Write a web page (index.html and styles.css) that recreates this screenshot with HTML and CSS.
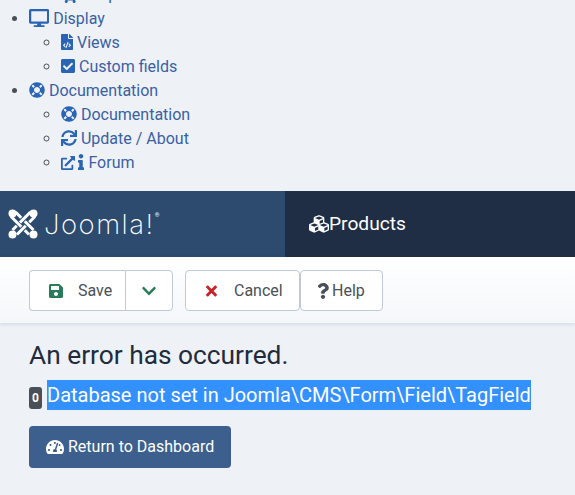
FILE: index.html
```html
<html>
    <head>
        <meta charset="utf-8">
        <title>Products</title>
        <link rel="stylesheet" href="styles.css">
    </head>
    <body>
        <ul class="menu">
            <li>
                <ul>
                    <li><svg class="icon icon-cart" viewBox="0 0 576 512"><path d="M528.12 301.319l47.273-208C578.806 78.301 567.391 64 551.99 64H159.208l-9.166-44.81C147.758 8.021 137.93 0 126.529 0H24C10.745 0 0 10.745 0 24v16c0 13.255 10.745 24 24 24h69.883l70.248 343.435C147.325 417.1 136 435.222 136 456c0 30.928 25.072 56 56 56s56-25.072 56-56c0-15.674-6.447-29.835-16.824-40h209.647C430.447 426.165 424 440.326 424 456c0 30.928 25.072 56 56 56s56-25.072 56-56c0-22.172-12.888-41.332-31.579-50.405l5.517-24.276c3.413-15.018-8.002-29.319-23.403-29.319H218.117l-6.545-32h293.145c11.206 0 20.92-7.754 23.403-18.681z"/></svg> Shop</li>
                </ul>
            </li>
            <li><svg class="icon icon-wide" viewBox="0 0 576 512"><path d="M528 0H48C21.5 0 0 21.5 0 48v320c0 26.5 21.5 48 48 48h192l-16 48h-72c-13.3 0-24 10.7-24 24s10.7 24 24 24h272c13.3 0 24-10.7 24-24s-10.7-24-24-24h-72l-16-48h192c26.5 0 48-21.5 48-48V48c0-26.5-21.5-48-48-48zm-16 352H64V64h448v288z"/></svg> Display
                <ul>
                    <li><svg class="icon" viewBox="0 0 384 512"><path d="M384 121.941V128H256V0h6.059c6.365 0 12.47 2.529 16.971 7.029l97.941 97.941A24.005 24.005 0 0 1 384 121.941zM248 160c-13.2 0-24-10.8-24-24V0H24C10.745 0 0 10.745 0 24v464c0 13.255 10.745 24 24 24h336c13.255 0 24-10.745 24-24V160H248zM123 422l-62-62 62-62 24 24-38 38 38 38zm50 34l-32-10 70-196 32 10zm88-34l-24-24 38-38-38-38 24-24 62 62z"/></svg> Views</li>
                    <li><svg class="icon" viewBox="0 0 448 512"><path d="M400 480H48c-26.51 0-48-21.49-48-48V80c0-26.51 21.49-48 48-48h352c26.51 0 48 21.49 48 48v352c0 26.51-21.49 48-48 48zm-204.686-98.059l184-184c6.248-6.248 6.248-16.379 0-22.627l-22.627-22.627c-6.248-6.248-16.379-6.249-22.628 0L184 302.745l-70.059-70.059c-6.248-6.248-16.379-6.248-22.628 0L68.686 255.313c-6.248 6.248-6.248 16.379 0 22.627l104 104c6.249 6.25 16.379 6.25 22.628.001z"/></svg> Custom fields</li>
                </ul>
            </li>
            <li><svg class="icon" viewBox="0 0 512 512"><path d="M256 8C119.033 8 8 119.033 8 256s111.033 248 248 248 248-111.033 248-248S392.967 8 256 8zm173.696 119.559l-63.399 63.399c-10.987-18.559-26.67-34.252-45.255-45.255l63.399-63.399a218.396 218.396 0 0 1 45.255 45.255zM256 352c-53.019 0-96-42.981-96-96s42.981-96 96-96 96 42.981 96 96-42.981 96-96 96zM127.559 82.304l63.399 63.399c-18.559 10.987-34.252 26.67-45.255 45.255l-63.399-63.399a218.372 218.372 0 0 1 45.255-45.255zM82.304 384.441l63.399-63.399c10.987 18.559 26.67 34.252 45.255 45.255l-63.399 63.399a218.396 218.396 0 0 1-45.255-45.255zm302.137 45.255l-63.399-63.399c18.559-10.987 34.252-26.67 45.255-45.255l63.399 63.399a218.403 218.403 0 0 1-45.255 45.255z"/></svg> Documentation
                <ul>
                    <li><svg class="icon" viewBox="0 0 512 512"><path d="M256 8C119.033 8 8 119.033 8 256s111.033 248 248 248 248-111.033 248-248S392.967 8 256 8zm173.696 119.559l-63.399 63.399c-10.987-18.559-26.67-34.252-45.255-45.255l63.399-63.399a218.396 218.396 0 0 1 45.255 45.255zM256 352c-53.019 0-96-42.981-96-96s42.981-96 96-96 96 42.981 96 96-42.981 96-96 96zM127.559 82.304l63.399 63.399c-18.559 10.987-34.252 26.67-45.255 45.255l-63.399-63.399a218.372 218.372 0 0 1 45.255-45.255zM82.304 384.441l63.399-63.399c10.987 18.559 26.67 34.252 45.255 45.255l-63.399 63.399a218.396 218.396 0 0 1-45.255-45.255zm302.137 45.255l-63.399-63.399c18.559-10.987 34.252-26.67 45.255-45.255l63.399 63.399a218.403 218.403 0 0 1-45.255 45.255z"/></svg> Documentation</li>
                    <li><svg class="icon" viewBox="0 0 512 512"><path d="M440.65 12.57l4 82.77A247.16 247.16 0 0 0 255.83 8C134.73 8 33.91 94.92 12.29 209.82A12 12 0 0 0 24.09 224h49.05a12 12 0 0 0 11.67-9.26 175.91 175.91 0 0 1 317-56.94l-101.46-4.86a12 12 0 0 0-12.57 12v47.41a12 12 0 0 0 12 12H500a12 12 0 0 0 12-12V12a12 12 0 0 0-12-12h-47.37a12 12 0 0 0-11.98 12.57zM255.83 432a175.61 175.61 0 0 1-146-77.8l101.8 4.87a12 12 0 0 0 12.57-12v-47.4a12 12 0 0 0-12-12H12a12 12 0 0 0-12 12V500a12 12 0 0 0 12 12h47.35a12 12 0 0 0 12-12.6l-4.15-82.57A247.17 247.17 0 0 0 255.83 504c121.11 0 221.93-86.92 243.55-201.82a12 12 0 0 0-11.8-14.18h-49.05a12 12 0 0 0-11.67 9.26A175.86 175.86 0 0 1 255.83 432z"/></svg> Update / About</li>
                    <li><svg class="icon icon-link" viewBox="0 0 512 512"><path d="M432,320H400a16,16,0,0,0-16,16V448H64V128H208a16,16,0,0,0,16-16V80a16,16,0,0,0-16-16H48A48,48,0,0,0,0,112V464a48,48,0,0,0,48,48H400a48,48,0,0,0,48-48V336A16,16,0,0,0,432,320ZM488,0h-128c-21.37,0-32.05,25.91-17,41l35.73,35.73L135,320.37a24,24,0,0,0,0,34L157.67,377a24,24,0,0,0,34,0L435.28,133.32,471,169c15,15,41,4.5,41-17V24A24,24,0,0,0,488,0Z"/></svg> <svg class="icon" viewBox="0 0 192 512"><path d="M20 424.229h20V279.771H20c-11.046 0-20-8.954-20-20V212c0-11.046 8.954-20 20-20h112c11.046 0 20 8.954 20 20v212.229h20c11.046 0 20 8.954 20 20V492c0 11.046-8.954 20-20 20H20c-11.046 0-20-8.954-20-20v-47.771c0-11.046 8.954-20 20-20zM96 0C56.235 0 24 32.235 24 72s32.235 72 72 72 72-32.235 72-72S135.764 0 96 0z"/></svg> Forum</li>
                </ul>
            </li>
        </ul>

        <header class="header">
            <div class="brand">
                <svg class="brand-mark" viewBox="0 0 30 30">
                    <g class="band">
                        <path class="band-gap" d="M22.5 3 L4.5 21"/>
                        <path class="band-fill" d="M22.5 3 L4.5 21"/>
                        <path class="band-gap" d="M3 7.5 L21 25.5"/>
                        <path class="band-fill" d="M3 7.5 L21 25.5"/>
                        <path class="band-gap" d="M27 7.5 L9 25.5"/>
                        <path class="band-fill" d="M27 7.5 L9 25.5"/>
                        <path class="band-gap" d="M7.5 3 L25.5 21"/>
                        <path class="band-fill" d="M7.5 3 L25.5 21"/>
                        <path class="band-gap" d="M17.5 8 L12.5 13"/>
                        <path class="band-fill" d="M18 7.5 L12 13.5"/>
                    </g>
                    <g fill="#fff">
                        <circle cx="4.5" cy="4.5" r="4"/>
                        <circle cx="25.5" cy="4.5" r="4"/>
                        <circle cx="4.5" cy="25.5" r="4"/>
                        <circle cx="25.5" cy="25.5" r="4"/>
                    </g>
                </svg>
                <span class="brand-name">Joomla!</span><span class="brand-reg">®</span>
            </div>
            <div class="page-title">
                <svg class="title-icon" viewBox="0 0 512 512"><path d="M488.6 250.2L392 214V105.5c0-15-9.3-28.4-23.4-33.7l-100-37.5c-8.1-3.1-17.1-3.1-25.3 0l-100 37.5c-14.1 5.3-23.4 18.7-23.4 33.7V214l-96.6 36.2C9.3 255.5 0 268.9 0 283.9V394c0 13.6 7.7 26.1 19.9 32.2l100 50c10.1 5.1 22.1 5.1 32.2 0l103.9-52 103.9 52c10.1 5.1 22.1 5.1 32.2 0l100-50c12.2-6.1 19.9-18.6 19.9-32.2V283.9c0-15-9.3-28.4-23.4-33.7zM358 214.8l-85 31.9v-68.2l85-37v73.3zM154 104.1l102-38.2 102 38.2v.6l-102 41.4-102-41.4v-.6zm84 291.1l-85 42.5v-79.1l85-38.8v75.4zm0-112l-102 41.4-102-41.4v-.6l102-38.2 102 38.2v.6zm240 112l-85 42.5v-79.1l85-38.8v75.4zm0-112l-102 41.4-102-41.4v-.6l102-38.2 102 38.2v.6z"/></svg>
                <span>Products</span>
            </div>
        </header>

        <div class="toolbar">
            <div class="btn-group">
                <div class="btn btn-save">
                    <svg class="btn-icon save" viewBox="0 0 448 512"><path d="M433.941 129.941l-83.882-83.882A48 48 0 0 0 316.118 32H48C21.49 32 0 53.49 0 80v352c0 26.51 21.49 48 48 48h352c26.51 0 48-21.49 48-48V163.882a48 48 0 0 0-14.059-33.941zM224 416c-35.346 0-64-28.654-64-64 0-35.346 28.654-64 64-64s64 28.654 64 64c0 35.346-28.654 64-64 64zm96-304.52V212c0 6.627-5.373 12-12 12H76c-6.627 0-12-5.373-12-12V108c0-6.627 5.373-12 12-12h228.52c3.183 0 6.235 1.264 8.485 3.515l3.48 3.48A11.996 11.996 0 0 1 320 111.48z"/></svg>
                    <span>Save</span>
                </div>
                <div class="btn btn-more">
                    <svg class="btn-icon save" viewBox="0 0 448 512"><path d="M207.029 381.476L12.686 187.132c-9.373-9.373-9.373-24.569 0-33.941l22.667-22.667c9.357-9.357 24.522-9.375 33.901-.04L224 284.505l154.745-154.021c9.379-9.335 24.544-9.317 33.901.04l22.667 22.667c9.373 9.373 9.373 24.569 0 33.941L240.971 381.476c-9.373 9.372-24.569 9.372-33.942 0z"/></svg>
                </div>
            </div>
            <div class="btn btn-cancel">
                <svg class="btn-icon cancel" viewBox="0 0 352 512"><path d="M242.72 256l100.07-100.07c12.28-12.28 12.28-32.19 0-44.48l-22.24-22.24c-12.28-12.28-32.19-12.28-44.48 0L176 189.28 75.93 89.21c-12.28-12.28-32.19-12.28-44.48 0L9.21 111.45c-12.28 12.28-12.28 32.19 0 44.48L109.28 256 9.21 356.07c-12.28 12.28-12.28 32.19 0 44.48l22.24 22.24c12.28 12.28 32.2 12.28 44.48 0L176 322.72l100.07 100.07c12.28 12.28 32.2 12.28 44.48 0l22.24-22.24c12.28-12.28 12.28-32.19 0-44.48L242.72 256z"/></svg>
                <span>Cancel</span>
            </div>
            <div class="btn btn-help">
                <svg class="btn-icon help" viewBox="0 0 384 512"><path d="M202.021 0C122.202 0 70.503 32.703 29.914 91.026c-7.363 10.58-5.093 25.086 5.178 32.874l43.138 32.709c10.373 7.865 25.132 6.026 33.253-4.148 25.049-31.381 43.63-49.449 82.757-49.449 30.764 0 68.816 19.799 68.816 49.631 0 22.552-18.617 34.134-48.993 51.164-35.423 19.86-82.299 44.576-82.299 106.405V320c0 13.255 10.745 24 24 24h72.471c13.255 0 24-10.745 24-24v-5.773c0-42.86 125.268-44.645 125.268-160.627C377.504 66.256 286.902 0 202.021 0zM192 373.459c-38.196 0-69.271 31.075-69.271 69.271 0 38.195 31.075 69.27 69.271 69.27s69.271-31.075 69.271-69.271-31.075-69.27-69.271-69.27z"/></svg>
                <span>Help</span>
            </div>
        </div>

        <main class="content">
            <h1>An error has occurred.</h1>
            <p class="message"><span class="badge">0</span><span class="selected">Database not set in Joomla\CMS\Form\Field\TagField</span></p>
            <div class="btn-return">
                <svg class="return-icon" viewBox="0 0 576 512"><path d="M288 32C128.94 32 0 160.94 0 320c0 52.8 14.25 102.26 39.06 144.8 5.61 9.62 16.3 15.2 27.44 15.2h443c11.14 0 21.83-5.58 27.44-15.2C561.75 422.26 576 372.8 576 320c0-159.06-128.94-288-288-288zm0 64c14.71 0 26.58 10.13 30.32 23.65-1.11 2.26-2.64 4.23-3.45 6.67l-9.22 27.67c-5.13 3.49-10.97 6.01-17.64 6.01-17.67 0-32-14.33-32-32S270.33 96 288 96zM96 384c-17.67 0-32-14.33-32-32s14.33-32 32-32 32 14.33 32 32-14.33 32-32 32zm48-160c-17.67 0-32-14.33-32-32s14.33-32 32-32 32 14.33 32 32-14.33 32-32 32zm246.77-72.41l-61.33 184C343.13 347.33 352 364.54 352 384c0 11.72-3.38 22.55-8.88 32H232.88c-5.5-9.45-8.88-20.28-8.88-32 0-33.94 26.5-61.43 59.9-63.59l61.34-184.01c4.17-12.56 17.73-19.45 30.36-15.17 12.57 4.19 19.35 17.79 15.17 30.36zm14.66 57.2l15.52-46.55c3.47-1.29 7.13-2.23 11.05-2.23 17.67 0 32 14.33 32 32s-14.33 32-32 32c-11.38-.01-20.89-6.28-26.57-15.22zM480 384c-17.67 0-32-14.33-32-32s14.33-32 32-32 32 14.33 32 32-14.33 32-32 32z"/></svg>
                <span>Return to Dashboard</span>
            </div>
        </main>
    </body>
</html>
```

FILE: styles.css
```css
html {
    overflow: hidden;
}
body {
    margin: 0;
    height: 495px;
    overflow: hidden;
    font-family: Roboto, sans-serif;
    font-size: 16px;
    line-height: 24px;
    color: #22262a;
    background-color: #eef2f7;
}
.menu {
    margin: -41px 0 16px;
    padding-left: 29px;
    color: #3b5fa5;
}
.menu ul {
    margin: 0;
    padding-left: 32px;
}
.menu li::marker {
    color: #495057;
}
.icon {
    height: 16px;
    width: auto;
    vertical-align: -2px;
    fill: #2a64b4;
}
.icon-wide {
    height: 18px;
    vertical-align: -3px;
}
.icon-cart {
    height: 14px;
    vertical-align: -3px;
}
.icon-link {
    height: 14px;
    margin-right: -.5px;
}
.header {
    display: flex;
    height: 66px;
    background-color: #2d4a6f;
}
.brand {
    width: 285px;
    display: flex;
    align-items: center;
    padding-left: 8px;
    box-sizing: border-box;
    color: #fff;
}
.brand-mark {
    width: 30px;
    height: 30px;
    margin-right: 6px;
}
.band path {
    fill: none;
}
.band-gap {
    stroke: #2d4a6f;
    stroke-width: 5;
}
.band-fill {
    stroke: #fff;
    stroke-width: 3;
}
.brand-name {
    font-family: Inter, sans-serif;
    font-weight: 200;
    font-size: 27.5px;
    letter-spacing: 1.5px;
}
.brand-reg {
    font-size: 6px;
    align-self: flex-start;
    margin-top: 20px;
    line-height: 8px;
}
.page-title {
    flex: 1;
    display: flex;
    align-items: center;
    padding-left: 24px;
    background-color: #1f2e45;
    color: #fff;
    font-size: 19.2px;
    font-weight: 400;
}
.title-icon {
    width: 20px;
    height: 20px;
    fill: #fff;
}
.toolbar {
    display: flex;
    align-items: center;
    height: 66px;
    padding-left: 29px;
    background: linear-gradient(#fff, #f4f7fa);
    box-shadow: 0 1px 4px rgba(30, 50, 80, .15);
}
.btn-group {
    display: flex;
    margin-right: 12px;
}
.btn {
    display: flex;
    align-items: center;
    box-sizing: border-box;
    height: 41px;
    padding-top: 1px;
    background-color: #fff;
    border: 1px solid #c0c9d8;
    border-radius: 4px;
    color: #495057;
}
.btn-save {
    width: 96px;
    padding-left: 19px;
    border-right: 0;
    border-radius: 4px 0 0 4px;
}
.btn-save span {
    margin-left: 15px;
}
.btn-more {
    width: 48px;
    justify-content: center;
    border-radius: 0 4px 4px 0;
}
.btn-cancel {
    width: 115px;
    padding-left: 20px;
}
.btn-cancel span {
    margin-left: 17px;
}
.btn-help {
    width: 83px;
    padding-left: 16px;
}
.btn-help span {
    margin-left: 3px;
}
.btn-icon {
    height: 16px;
    width: auto;
}
.save {
    fill: #2a7a5c;
}
.cancel {
    fill: #c8232b;
}
.help {
    fill: #495057;
}
.content {
    padding: 16px 29px 0;
}
h1 {
    margin: 0;
    font-size: 26.3px;
    font-weight: 400;
    line-height: 32px;
    color: #212b3d;
}
.message {
    display: flex;
    align-items: flex-end;
    margin: 9px 0 16px;
    font-size: 20px;
}
.badge {
    box-sizing: border-box;
    width: 13px;
    height: 22px;
    margin-right: 5px;
    margin-bottom: 1px;
    background-color: #495057;
    border-radius: 3px;
    color: #fff;
    font-size: 12px;
    font-weight: 700;
    line-height: 22px;
    text-align: center;
}
.selected {
    background-color: #3390ff;
    color: #fff;
    line-height: 30px;
}
.btn-return {
    display: inline-flex;
    align-items: center;
    box-sizing: border-box;
    width: 202px;
    height: 42px;
    padding-left: 17px;
    background-color: #3c5f8e;
    border-radius: 4px;
    color: #fff;
}
.btn-return span {
    margin-left: 4px;
}
.return-icon {
    height: 16px;
    width: auto;
    fill: #fff;
}
```
